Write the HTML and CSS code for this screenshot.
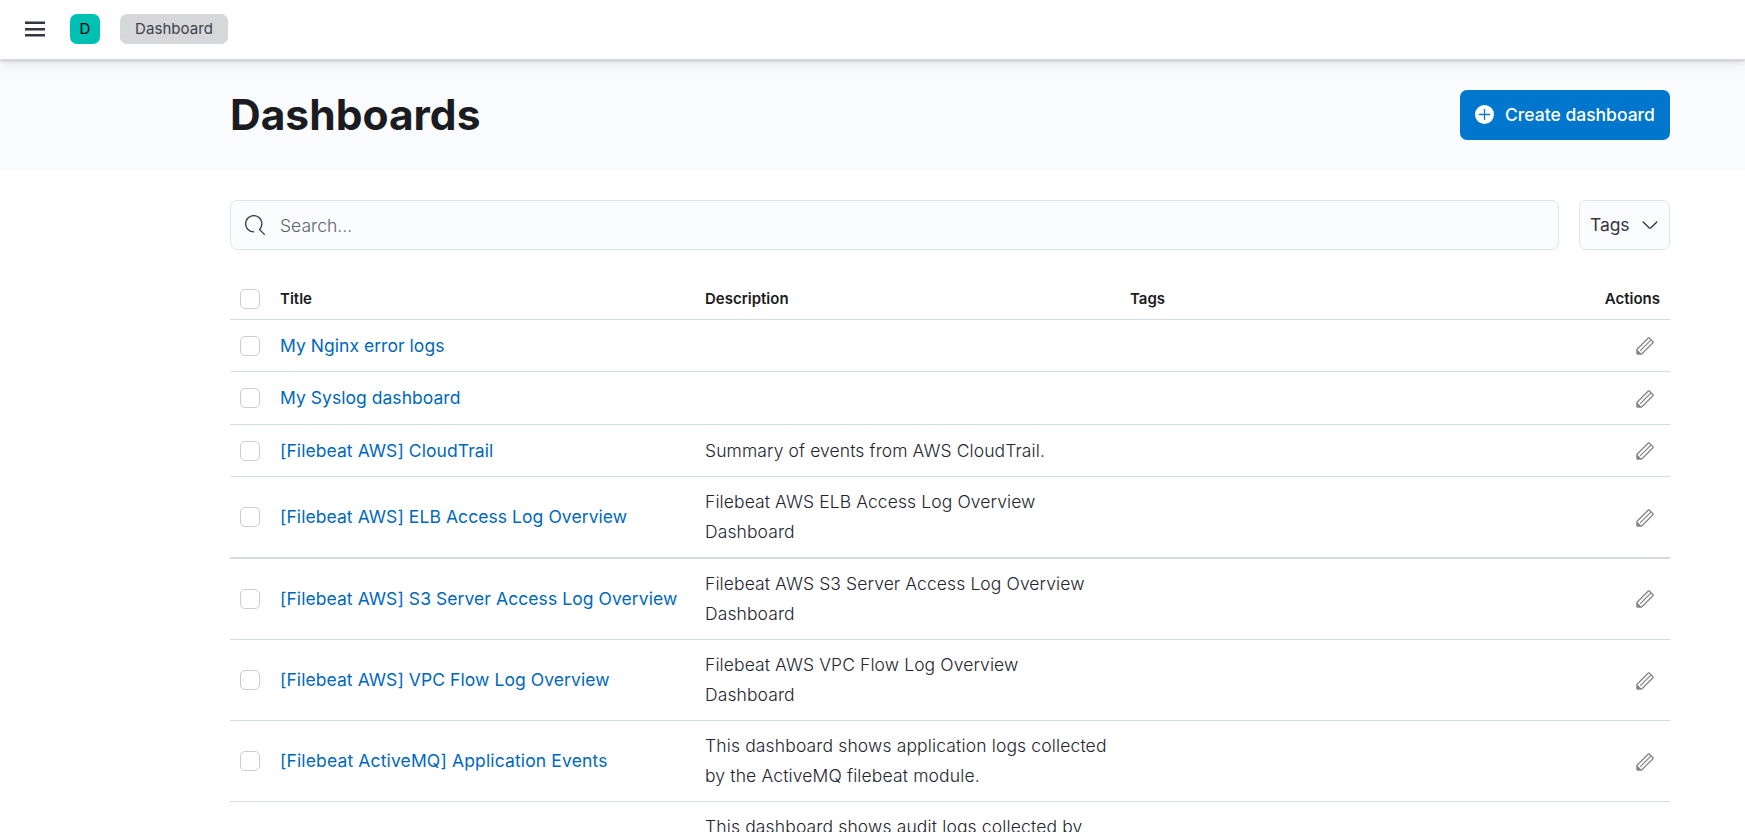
FILE: index.html
```html
<!DOCTYPE html>
<html lang="en">
<head>
<meta charset="utf-8">
<title>Dashboards</title>
<link rel="stylesheet" href="styles.css">
</head>
<body>
<svg class="defs" aria-hidden="true">
  <symbol id="pencil" viewBox="0 0 16 16"><path d="M12.148 3.148L11 2l-9 9v3h3l9-9-1.144-1.144-8.002 7.998a.502.502 0 01-.708 0 .502.502 0 010-.708l8.002-7.998zM11 1c.256 0 .512.098.707.293l3 3a.999.999 0 010 1.414l-9 9A.997.997 0 015 15H2a1 1 0 01-1-1v-3c0-.265.105-.52.293-.707l9-9A.997.997 0 0111 1zM5 14H2v-3l3 3z"/></symbol>
</svg>
<header class="topbar">
  <svg class="menu" viewBox="0 0 20 20"><path d="M0 2.600h20v2.400H0zM0 9h20v2.400H0zM0 15h20v2.400H0z"/></svg>
  <span class="space">D</span>
  <span class="crumb">Dashboard</span>
</header>
<section class="pagehead">
  <h1>Dashboards</h1>
  <button class="create">
    <svg class="plus" viewBox="0 0 15 15"><path fill-rule="evenodd" d="M7.5 0a7.5 7.5 0 110 15 7.5 7.5 0 010-15zM7 7H3.5a.5.5 0 000 1H7v3.5a.5.5 0 101 0V8h3.5a.5.5 0 100-1H8V3.500a.5.5 0 10-1 0V7z"/></svg>
    <span>Create dashboard</span>
  </button>
</section>
<main class="content">
  <div class="filters">
    <div class="search">
      <svg class="glass" viewBox="0 0 16 16"><path d="M11.271 11.978l3.872 3.873a.502.502 0 00.708 0 .502.502 0 000-.708l-3.565-3.564c2.38-2.747 2.267-6.923-.342-9.532-2.73-2.73-7.17-2.73-9.898 0-2.728 2.729-2.728 7.17 0 9.9a6.955 6.955 0 004.949 2.05.5.5 0 000-1 5.96 5.96 0 01-4.242-1.757 6.01 6.01 0 010-8.486 6.004 6.004 0 018.484 0 6.01 6.01 0 010 8.486.5.5 0 00.034.738z"/></svg>
      <span>Search...</span>
    </div>
    <div class="tagfilter">
      <span>Tags</span>
      <svg class="arrow" viewBox="0 0 16 16"><path d="M13.069 5.157L8.384 9.768a.546.546 0 01-.768 0L2.93 5.158a.552.552 0 00-.771 0 .53.53 0 000 .759l4.684 4.61c.641.631 1.672.63 2.312 0l4.684-4.61a.53.53 0 000-.76.552.552 0 00-.771 0z"/></svg>
    </div>
  </div>
  <div class="table">
    <div class="row head"><i class="box"></i><b>Title</b><b>Description</b><b>Tags</b><b class="last">Actions</b></div>
    <div class="row"><i class="box"></i><a>My Nginx error logs</a><p></p><p></p><svg class="edit"><use href="#pencil"/></svg></div>
    <div class="row odd"><i class="box"></i><a>My Syslog dashboard</a><p></p><p></p><svg class="edit"><use href="#pencil"/></svg></div>
    <div class="row"><i class="box"></i><a class="fb">[Filebeat AWS] CloudTrail</a><p>Summary of events from AWS CloudTrail.</p><p></p><svg class="edit"><use href="#pencil"/></svg></div>
    <div class="row tall thick"><i class="box"></i><a class="fb">[Filebeat AWS] ELB Access Log Overview</a><p>Filebeat AWS ELB Access Log Overview<br>Dashboard</p><p></p><svg class="edit"><use href="#pencil"/></svg></div>
    <div class="row tall raised"><i class="box"></i><a class="fb">[Filebeat AWS] S3 Server Access Log Overview</a><p>Filebeat AWS S3 Server Access Log Overview<br>Dashboard</p><p></p><svg class="edit"><use href="#pencil"/></svg></div>
    <div class="row tall"><i class="box"></i><a class="fb">[Filebeat AWS] VPC Flow Log Overview</a><p>Filebeat AWS VPC Flow Log Overview<br>Dashboard</p><p></p><svg class="edit"><use href="#pencil"/></svg></div>
    <div class="row tall"><i class="box"></i><a class="fb mq">[Filebeat ActiveMQ] Application Events</a><p class="mq">This dashboard shows application logs collected<br>by the ActiveMQ filebeat module.</p><p></p><svg class="edit"><use href="#pencil"/></svg></div>
    <div class="row tall"><span></span><span></span><p class="mq">This dashboard shows audit logs collected by</p></div>
  </div>
</main>
</body>
</html>
```
FILE: styles.css
```css
* { box-sizing: border-box; }
body {
  margin: 0;
  height: 832px;
  overflow: hidden;
  background: #fff;
  color: #343741;
  font: 300 17.5px/30px Inter, sans-serif;
  letter-spacing: 0;
}
h1, p { margin: 0; }
.defs { display: none; }

.topbar {
  position: relative;
  display: flex;
  align-items: center;
  height: 60px;
  padding: 0 25px 2px;
  border-bottom: 1px solid #d3dae6;
  background: #fff;
  box-shadow: 0 1px 2px rgba(0, 0, 0, .12), 0 3px 5px rgba(0, 0, 0, .06), 0 6px 15px rgba(0, 0, 0, .06);
}
.menu { width: 20px; height: 20px; margin-top: 19px; align-self: flex-start; fill: #343741; }
.space {
  width: 30px;
  height: 30px;
  margin: 0 20px 0 25px;
  border-radius: 7px;
  background: #00bfb3;
  color: #000;
  font-size: 15px;
  font-weight: 400;
  text-align: center;
}
.crumb {
  height: 30px;
  padding: 0 15px;
  border-radius: 7px;
  background: #d6d7d9;
  color: #403f4c;
  font-size: 15px;
  font-weight: 400;
  letter-spacing: 0.07px;
}

.pagehead {
  display: flex;
  justify-content: space-between;
  height: 110px;
  padding: 30px 75px 0 230px;
  background: #fafbfd;
}
h1 {
  color: #1a1c21;
  font-size: 42.5px;
  line-height: 50px;
  font-weight: 700;
}
.create {
  display: flex;
  align-items: center;
  gap: 11px;
  width: 210px;
  height: 50px;
  padding: 0 15px 1px;
  border: 0;
  border-radius: 7px;
  background: #0077cc;
  color: #fff;
  font: 500 17.5px/30px Inter, sans-serif;
  white-space: nowrap;
}
.plus { width: 19px; height: 19px; fill: #fff; flex: none; }

.content { padding: 30px 75px 0 230px; }
.filters { display: flex; gap: 20px; height: 50px; }
.search, .tagfilter {
  display: flex;
  align-items: center;
  border: 1px solid #e0e4f0;
  border-radius: 7px;
  background: #fbfcfd;
}
.search { flex: 1; gap: 15px; padding-left: 14px; color: #5c6370; }
.search span { padding-top: 2px; letter-spacing: 0.04px; }
.glass { width: 20px; height: 20px; fill: #343741; }
.tagfilter { width: 91px; justify-content: space-between; padding: 0 9px 0 10px; font-weight: 400; letter-spacing: -0.0875px; }
.arrow { width: 20px; height: 20px; fill: #343741; }

.table { padding-top: 29px; }
.row {
  display: grid;
  grid-template-columns: 40px 425px 425px 1fr auto;
  align-items: start;
  height: 52px;
  padding: 11px 10px 0;
  border-bottom: 1px solid #d3dae6;
}
.odd { height: 53px; }
.tall { height: 81px; padding-top: 10px; }
.thick { height: 82px; border-bottom-width: 2px; }
.box {
  width: 20px;
  height: 20px;
  margin-top: 5px;
  border: 1px solid #c9cbcd;
  border-radius: 5px;
  background: #fff;
}
.tall .box { margin-top: 20px; }
.row a { color: #0068bc; font-weight: 400; letter-spacing: 0.04px; }
.row .fb { letter-spacing: 0.07px; }
.row p { color: #22252e; letter-spacing: 0.1px; }
.row .mq { letter-spacing: 0.14px; }
.tall a { margin-top: 15px; }
.edit { width: 20px; height: 20px; margin: 5px 5px 0 0; fill: #858585; }
.odd .edit { margin-top: 6px; }
.tall .edit { margin-top: 21px; }
.raised .edit { margin-top: 20px; }
.head { height: 41px; padding-top: 5px; }
.head b { color: #1a1c21; font-size: 15px; line-height: 30px; font-weight: 600; }
```
